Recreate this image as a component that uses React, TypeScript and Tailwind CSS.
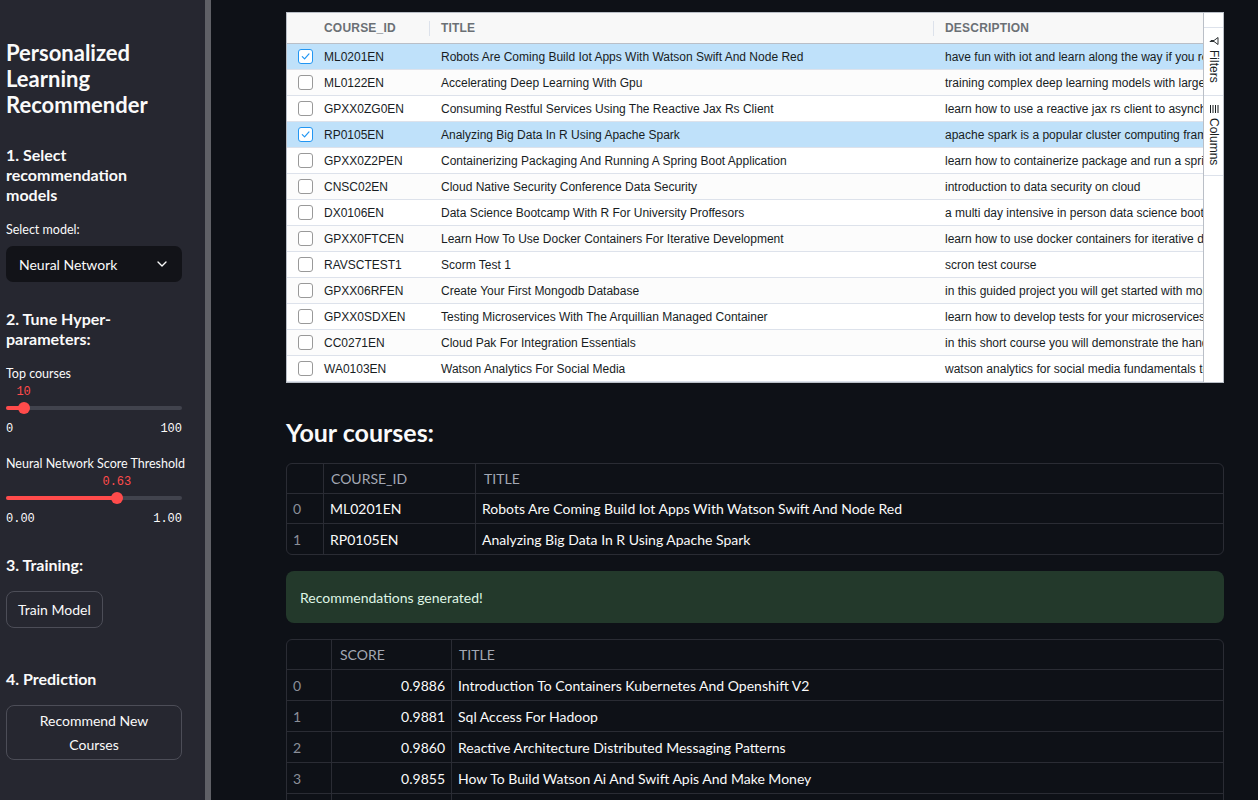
import { ChevronDown } from 'lucide-react';

const courses = [
  { id: 'ML0201EN', title: 'Robots Are Coming Build Iot Apps With Watson Swift And Node Red', desc: 'have fun with iot and learn along the way if you re already familiar with node red', selected: true },
  { id: 'ML0122EN', title: 'Accelerating Deep Learning With Gpu', desc: 'training complex deep learning models with large datasets takes a long time' },
  { id: 'GPXX0ZG0EN', title: 'Consuming Restful Services Using The Reactive Jax Rs Client', desc: 'learn how to use a reactive jax rs client to asynchronously invoke rest services' },
  { id: 'RP0105EN', title: 'Analyzing Big Data In R Using Apache Spark', desc: 'apache spark is a popular cluster computing framework used for big data', selected: true },
  { id: 'GPXX0Z2PEN', title: 'Containerizing Packaging And Running A Spring Boot Application', desc: 'learn how to containerize package and run a spring boot application' },
  { id: 'CNSC02EN', title: 'Cloud Native Security Conference Data Security', desc: 'introduction to data security on cloud' },
  { id: 'DX0106EN', title: 'Data Science Bootcamp With R For University Proffesors', desc: 'a multi day intensive in person data science bootcamp' },
  { id: 'GPXX0FTCEN', title: 'Learn How To Use Docker Containers For Iterative Development', desc: 'learn how to use docker containers for iterative development' },
  { id: 'RAVSCTEST1', title: 'Scorm Test 1', desc: 'scron test course' },
  { id: 'GPXX06RFEN', title: 'Create Your First Mongodb Database', desc: 'in this guided project you will get started with mongodb' },
  { id: 'GPXX0SDXEN', title: 'Testing Microservices With The Arquillian Managed Container', desc: 'learn how to develop tests for your microservices' },
  { id: 'CC0271EN', title: 'Cloud Pak For Integration Essentials', desc: 'in this short course you will demonstrate the hands on' },
  { id: 'WA0103EN', title: 'Watson Analytics For Social Media', desc: 'watson analytics for social media fundamentals teaches' },
];

const yourCourses = [
  { id: 'ML0201EN', title: 'Robots Are Coming Build Iot Apps With Watson Swift And Node Red' },
  { id: 'RP0105EN', title: 'Analyzing Big Data In R Using Apache Spark' },
];

const recs = [
  { score: '0.9886', title: 'Introduction To Containers Kubernetes And Openshift V2' },
  { score: '0.9881', title: 'Sql Access For Hadoop' },
  { score: '0.9860', title: 'Reactive Architecture Distributed Messaging Patterns' },
  { score: '0.9855', title: 'How To Build Watson Ai And Swift Apis And Make Money' },
];

function Slider({ label, value, min, max, pct }: { label: string; value: string; min: string; max: string; pct: number }) {
  return (
    <div>
      <div className="text-[12.5px] leading-[18px] text-[#fafafa] whitespace-nowrap">{label}</div>
      <div className="relative mt-[1px] h-[16px] font-['Liberation_Mono',monospace] text-[12px] leading-[16px] text-[#ff4b4b]">
        <span className="absolute -translate-x-1/2" style={{ left: `${pct}%` }}>{value}</span>
      </div>
      <div className="relative h-[16px] flex items-center">
        <div className="w-full h-[4px] rounded-full bg-[#41434d]">
          <div className="h-full rounded-full bg-[#ff4b4b]" style={{ width: `${pct}%` }} />
        </div>
        <div className="absolute w-[12px] h-[12px] rounded-full bg-[#ff4b4b] -translate-x-1/2" style={{ left: `${pct}%` }} />
      </div>
      <div className="mt-[5px] flex justify-between font-['Liberation_Mono',monospace] text-[12px] leading-[16px] text-[#fafafa]">
        <span>{min}</span>
        <span>{max}</span>
      </div>
    </div>
  );
}

function Sidebar() {
  return (
    <aside className="w-[205px] shrink-0 bg-[#262730] pl-[6px] pr-[23px] pt-[40px] text-[#fafafa]">
      <h1 className="text-[22px] leading-[26px] font-bold">Personalized Learning Recommender</h1>

      <h3 className="mt-[27px] text-[16px] leading-[20px] font-bold">1. Select recommendation models</h3>
      <div className="mt-[16px] text-[12.5px] leading-[18px]">Select model:</div>
      <div className="mt-[7px] h-[36px] rounded-[7px] bg-[#121318] flex items-center justify-between pl-[13px] pr-[12px] text-[14px]">
        <span>Neural Network</span>
        <ChevronDown size={16} strokeWidth={2} />
      </div>

      <h3 className="mt-[27px] text-[16px] leading-[20px] font-bold">2. Tune Hyper-<br />parameters:</h3>
      <div className="mt-[16px]">
        <Slider label="Top courses" value="10" min="0" max="100" pct={10} />
      </div>
      <div className="mt-[18px]">
        <Slider label="Neural Network Score Threshold" value="0.63" min="0.00" max="1.00" pct={63} />
      </div>

      <h3 className="mt-[28px] text-[16px] leading-[20px] font-bold">3. Training:</h3>
      <button className="mt-[16px] h-[37px] px-[11px] rounded-[8px] border border-[#4c4d57] text-[14px]">Train Model</button>

      <h3 className="mt-[41px] text-[16px] leading-[20px] font-bold">4. Prediction</h3>
      <button className="mt-[16px] w-full h-[55px] rounded-[8px] border border-[#4c4d57] text-[14px] leading-[24px]">
        Recommend New<br />Courses
      </button>
    </aside>
  );
}

function Checkbox({ checked }: { checked?: boolean }) {
  return (
    <div className={`w-[15px] h-[15px] shrink-0 rounded-[3px] border bg-white flex items-center justify-center ${checked ? 'border-[#2196f3]' : 'border-[#999]'}`}>
      {checked && (
        <svg width="11" height="11" viewBox="0 0 12 12" fill="none">
          <path d="M2.5 6.2 L5 8.6 L9.8 3.2" stroke="#2196f3" strokeWidth="1.3" strokeLinecap="round" strokeLinejoin="round" />
        </svg>
      )}
    </div>
  );
}

function CourseGrid() {
  return (
    <div className="flex border border-[#babfc7] bg-white font-['Liberation_Sans',Arial,sans-serif] text-[12px] text-[#181d1f]">
      <div className="flex-1 min-w-0 overflow-hidden">
        <div className="flex h-[31px] items-center bg-[#f8f8f8] border-b border-[#babfc7] font-semibold text-[#6b7075] tracking-[0.2px]">
          <div className="w-[143px] shrink-0 pl-[37px] flex items-center justify-between">
            <span>COURSE_ID</span>
            <span className="w-px h-[15px] bg-[#dde2eb]" />
          </div>
          <div className="w-[504px] shrink-0 pl-[11px] flex items-center justify-between">
            <span>TITLE</span>
            <span className="w-px h-[15px] bg-[#dde2eb]" />
          </div>
          <div className="pl-[11px] whitespace-nowrap">DESCRIPTION</div>
        </div>
        {courses.map((c, i) => (
          <div
            key={c.id}
            className={`flex h-[26px] items-center border-b border-[#dde2eb] whitespace-nowrap ${c.selected ? 'bg-[#bfe1fa]' : i % 2 === 1 ? 'bg-[#fcfcfc]' : 'bg-white'}`}
          >
            <div className="w-[143px] shrink-0 pl-[11px] flex items-center gap-[11px]">
              <Checkbox checked={c.selected} />
              <span>{c.id}</span>
            </div>
            <div className="w-[504px] shrink-0 pl-[11px]">{c.title}</div>
            <div className="min-w-0 flex-1 overflow-hidden pl-[11px]">{c.desc}</div>
          </div>
        ))}
      </div>
      <div className="w-[20px] shrink-0 border-l border-[#babfc7] bg-white flex flex-col text-[12px] text-[#181d1f]">
        <div className="h-[15px] border-b border-[#dde2eb]" />
        <div className="h-[68px] border-b border-[#dde2eb] flex flex-col items-center pt-[8px] gap-[4px]">
          <svg width="10" height="10" viewBox="0 0 10 10" fill="none">
            <path d="M1.5 1 L8.5 1 L5.5 5 L5.5 9 L4.5 8 L4.5 5 Z" stroke="#181d1f" strokeWidth="0.9" strokeLinejoin="round" transform="rotate(90 5 5)" />
          </svg>
          <span className="[writing-mode:vertical-rl] leading-[12px]">Filters</span>
        </div>
        <div className="h-[80px] border-b border-[#dde2eb] flex flex-col items-center pt-[8px] gap-[4px]">
          <svg width="10" height="10" viewBox="0 0 10 10">
            <rect x="1" y="1" width="1" height="8" fill="#181d1f" />
            <rect x="3.5" y="1" width="1" height="8" fill="#181d1f" />
            <rect x="6" y="1" width="1" height="8" fill="#181d1f" />
            <rect x="8.5" y="1" width="1" height="8" fill="#181d1f" />
          </svg>
          <span className="[writing-mode:vertical-rl] leading-[12px]">Columns</span>
        </div>
      </div>
    </div>
  );
}

function YourCourses() {
  return (
    <div className="mt-[15px] rounded-[6px] border border-[#2a2c34] text-[14px] overflow-hidden">
      <div className="flex h-[30px] items-center border-b border-[#2a2c34] text-[#a3a8b4]">
        <div className="w-[37px] h-full border-r border-[#2a2c34]" />
        <div className="w-[152px] h-full border-r border-[#2a2c34] flex items-center pl-[7px]">COURSE_ID</div>
        <div className="pl-[8px]">TITLE</div>
      </div>
      {yourCourses.map((c, i) => (
        <div key={c.id} className={`flex h-[30px] items-center text-[#fafafa] ${i < yourCourses.length - 1 ? 'border-b border-[#2a2c34]' : ''}`}>
          <div className="w-[37px] h-full border-r border-[#2a2c34] flex items-center pl-[6px] text-[#8b8f99]">{i}</div>
          <div className="w-[152px] h-full border-r border-[#2a2c34] flex items-center pl-[6px]">{c.id}</div>
          <div className="pl-[6px]">{c.title}</div>
        </div>
      ))}
    </div>
  );
}

function Recommendations() {
  return (
    <div className="mt-[16px] rounded-t-[6px] border border-[#2a2c34] text-[14px]">
      <div className="flex h-[30px] items-center border-b border-[#2a2c34] text-[#a3a8b4]">
        <div className="w-[45px] h-full border-r border-[#2a2c34]" />
        <div className="w-[120px] h-full border-r border-[#2a2c34] flex items-center pl-[8px]">SCORE</div>
        <div className="pl-[7px]">TITLE</div>
      </div>
      {recs.map((r, i) => (
        <div key={i} className="flex h-[31px] items-center border-b border-[#2a2c34] text-[#fafafa]">
          <div className="w-[45px] h-full border-r border-[#2a2c34] flex items-center pl-[6px] text-[#8b8f99]">{i}</div>
          <div className="w-[120px] h-full border-r border-[#2a2c34] flex items-center justify-end pr-[6px]">{r.score}</div>
          <div className="pl-[6px]">{r.title}</div>
        </div>
      ))}
      {/* next row continues below the fold */}
      <div className="flex h-[31px]">
        <div className="w-[45px] h-full border-r border-[#2a2c34]" />
        <div className="w-[120px] h-full border-r border-[#2a2c34]" />
      </div>
    </div>
  );
}

export default function App() {
  return (
    <div className="h-[800px] overflow-hidden flex bg-[#0e1117] font-['Lato','Noto_Sans',sans-serif]">
      <Sidebar />
      <div className="w-[6px] shrink-0 bg-[#5f6066]" />
      <main className="flex-1 pl-[75px] pt-[12px]">
        <div className="w-[938px]">
          <CourseGrid />

          <h2 className="mt-[33px] text-[25px] leading-[32px] font-bold text-[#fafafa]">Your courses:</h2>
          <YourCourses />

          <div className="mt-[16px] h-[52px] rounded-[8px] bg-[#23392b] flex items-center px-[14px] text-[14px] text-[#dff5e5]">
            Recommendations generated!
          </div>

          <Recommendations />
        </div>
      </main>
    </div>
  );
}
